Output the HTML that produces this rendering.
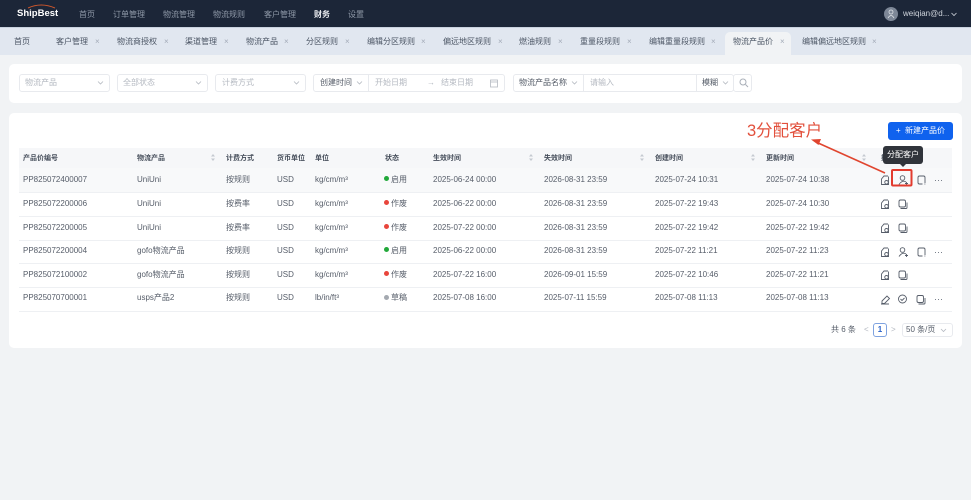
<!DOCTYPE html>
<html lang="zh"><head><meta charset="utf-8"><style>
*{box-sizing:border-box}
html,body{margin:0;padding:0}
body{width:971px;height:500px;overflow:hidden;position:relative;background:#f1f3f5;font-family:"Liberation Sans","Noto Sans CJK SC",sans-serif;font-size:8px;color:#565d69}
.a{position:absolute;white-space:nowrap;line-height:12px}
.box{position:absolute;background:#fff;border:1px solid #e8eaee;border-radius:3px}
.m{top:9px;color:#8f99a8}
.t{top:36px;color:#4c5665}
.x{top:36px;color:#a3abb8}
.ph{color:#b4b9c1;top:77px}
.dk{color:#555c68;top:77px}
.hd{top:153px;font-weight:bold;font-size:7px;color:#454d5a}
.r{height:1px;left:19px;width:933px;background:#eef0f3;position:absolute}
.d{position:absolute;width:5px;height:5px;border-radius:50%}
svg{position:absolute;fill:none;overflow:visible}
.ic{stroke:#565d69;stroke-width:.9}
.ch{stroke:#b4b9c1;stroke-width:.8}
.so{fill:#c4c9d0}
</style></head><body>
<div class="a" style="left:0;top:0;width:971px;height:27px;background:#1c2638"></div>
<div class="a" style="left:0;top:27px;width:971px;height:28px;background:#e1e7f0;border-top:1px solid #c9d2df"></div>
<svg style="left:0;top:0" width="70" height="12"><path d="M28 8Q41 2 55 8" stroke="#c8552c" stroke-width="1"/></svg>
<div class="a" style="left:17px;top:8px;color:#fff;font-weight:bold;font-size:9.500px">ShipBest</div>
<div class="a m" style="left:79px">首页</div><div class="a m" style="left:113px">订单管理</div><div class="a m" style="left:163px">物流管理</div><div class="a m" style="left:213px">物流规则</div><div class="a m" style="left:264px">客户管理</div><div class="a m" style="left:314px;color:#eef0f4;font-weight:bold">财务</div><div class="a m" style="left:348px">设置</div>
<div class="a" style="left:884px;top:7px;width:14px;height:14px;border-radius:50%;background:#7d8797"></div>
<svg style="left:887px;top:9px" width="8" height="9"><circle cx="4" cy="3" r="2" stroke="#dfe3e8" stroke-width=".8"/><path d="M1 9Q4 4 7 9" stroke="#dfe3e8" stroke-width=".8"/></svg>
<div class="a" style="left:903px;top:8px;color:#cfd4dc">weiqian@d...</div>
<svg style="left:0;top:0" width="971" height="27"><path d="M951.500 13l2.500 2.500 2.500-2.500" stroke="#cfd4dc" stroke-width=".8"/></svg>

<div class="a" style="left:725px;top:32px;width:66px;height:23px;background:#f1f3f5;border-radius:5px 5px 0 0"></div>
<div class="a t" style="left:14px">首页</div>
<div class="a t" style="left:56px">客户管理</div><div class="a x" style="left:95px">×</div>
<div class="a t" style="left:117px">物流商授权</div><div class="a x" style="left:164px">×</div>
<div class="a t" style="left:185px">渠道管理</div><div class="a x" style="left:224px">×</div>
<div class="a t" style="left:246px">物流产品</div><div class="a x" style="left:284px">×</div>
<div class="a t" style="left:306px">分区规则</div><div class="a x" style="left:345px">×</div>
<div class="a t" style="left:367px">编辑分区规则</div><div class="a x" style="left:421px">×</div>
<div class="a t" style="left:443px">偏远地区规则</div><div class="a x" style="left:498px">×</div>
<div class="a t" style="left:519px">燃油规则</div><div class="a x" style="left:558px">×</div>
<div class="a t" style="left:580px">重量段规则</div><div class="a x" style="left:627px">×</div>
<div class="a t" style="left:649px">编辑重量段规则</div><div class="a x" style="left:711px">×</div>
<div class="a t" style="left:733px">物流产品价</div><div class="a x" style="left:780px">×</div>
<div class="a t" style="left:802px">编辑偏远地区规则</div><div class="a x" style="left:872px">×</div>

<div class="a" style="left:9px;top:64px;width:953px;height:39px;background:#fff;border-radius:5px"></div>
<div class="box" style="left:19px;top:74px;width:91px;height:18px"></div><div class="a ph" style="left:25px">物流产品</div>
<div class="box" style="left:117px;top:74px;width:91px;height:18px"></div><div class="a ph" style="left:123px">全部状态</div>
<div class="box" style="left:215px;top:74px;width:91px;height:18px"></div><div class="a ph" style="left:222px">计费方式</div>
<div class="box" style="left:313px;top:74px;width:192px;height:18px"></div><div class="a" style="left:368px;top:74px;width:1px;height:18px;background:#e8eaee"></div>
<div class="a dk" style="left:320px">创建时间</div><div class="a ph" style="left:375px">开始日期</div><div class="a ph" style="left:441px">结束日期</div><div class="a ph" style="left:427px">→</div>
<svg style="left:490px;top:79px" width="9" height="9"><rect x=".5" y="1" width="7" height="7" stroke="#b4b9c1" stroke-width=".8"/><path d="M.5 3h7" stroke="#b4b9c1" stroke-width=".8"/></svg>
<div class="box" style="left:513px;top:74px;width:221px;height:18px"></div><div class="a" style="left:583px;top:74px;width:1px;height:18px;background:#e8eaee"></div><div class="a" style="left:696px;top:74px;width:1px;height:18px;background:#e8eaee"></div>
<div class="a dk" style="left:519px">物流产品名称</div><div class="a ph" style="left:590px">请输入</div><div class="a dk" style="left:702px">模糊</div>
<div class="box" style="left:733px;top:74px;width:19px;height:18px"></div>
<svg style="left:739px;top:78px" width="10" height="10"><circle cx="4" cy="4" r="3" stroke="#a9afb8"/><path d="M6.500 6.500l2.500 2.500" stroke="#a9afb8"/></svg>
<svg style="left:0;top:0" width="971" height="100"><path class="ch" d="M98 81.500l2.500 2.500 2.500-2.500M196 81.500l2.500 2.500 2.500-2.500M294 81.500l2.500 2.500 2.500-2.500M357 81.500l2.500 2.500 2.500-2.500M572 81.500l2.500 2.500 2.500-2.500M723 81.500l2.500 2.500 2.500-2.500"/></svg>

<div class="a" style="left:9px;top:113px;width:953px;height:235px;background:#fff;border-radius:5px"></div>
<div class="a" style="left:888px;top:122px;width:65px;height:18px;background:#0f62ee;border-radius:3px;color:#fff;text-align:center;line-height:18px;word-spacing:2px">+ 新建产品价</div>
<div class="a" style="left:19px;top:148px;width:933px;height:20px;background:#f6f7f9"></div>
<div class="a" style="left:19px;top:168px;width:933px;height:24px;background:#f8f9fa"></div>
<div class="r" style="top:192px"></div><div class="r" style="top:216px"></div><div class="r" style="top:240px"></div><div class="r" style="top:263px"></div><div class="r" style="top:287px"></div><div class="r" style="top:311px"></div>

<div class="a hd" style="left:23px">产品价编号</div><div class="a hd" style="left:137px">物流产品</div><div class="a hd" style="left:226px">计费方式</div><div class="a hd" style="left:277px">货币单位</div><div class="a hd" style="left:315px">单位</div><div class="a hd" style="left:385px">状态</div><div class="a hd" style="left:433px">生效时间</div><div class="a hd" style="left:544px">失效时间</div><div class="a hd" style="left:655px">创建时间</div><div class="a hd" style="left:766px">更新时间</div><div class="a hd" style="left:881px">操作</div>
<svg style="left:0;top:0" width="971" height="170"><path class="so" d="M211 156.500l2-2.500 2 2.500zM211 158.500l2 2.500 2-2.500zM529 156.500l2-2.500 2 2.500zM529 158.500l2 2.500 2-2.500zM640 156.500l2-2.500 2 2.500zM640 158.500l2 2.500 2-2.500zM751 156.500l2-2.500 2 2.500zM751 158.500l2 2.500 2-2.500zM862 156.500l2-2.500 2 2.500zM862 158.500l2 2.500 2-2.500z"/></svg>

<div class="a" style="left:23px;top:174px">PP825072400007</div><div class="a" style="left:137px;top:174px">UniUni</div><div class="a" style="left:226px;top:174px">按规则</div><div class="a" style="left:277px;top:174px">USD</div><div class="a" style="left:315px;top:174px">kg/cm/m³</div><div class="d" style="left:384px;top:176px;background:#22a83a"></div><div class="a" style="left:391px;top:174px">启用</div><div class="a" style="left:433px;top:174px">2025-06-24 00:00</div><div class="a" style="left:544px;top:174px">2026-08-31 23:59</div><div class="a" style="left:655px;top:174px">2025-07-24 10:31</div><div class="a" style="left:766px;top:174px">2025-07-24 10:38</div>

<div class="a" style="left:23px;top:198px">PP825072200006</div><div class="a" style="left:137px;top:198px">UniUni</div><div class="a" style="left:226px;top:198px">按费率</div><div class="a" style="left:277px;top:198px">USD</div><div class="a" style="left:315px;top:198px">kg/cm/m³</div><div class="d" style="left:384px;top:200px;background:#e8453c"></div><div class="a" style="left:391px;top:198px">作废</div><div class="a" style="left:433px;top:198px">2025-06-22 00:00</div><div class="a" style="left:544px;top:198px">2026-08-31 23:59</div><div class="a" style="left:655px;top:198px">2025-07-22 19:43</div><div class="a" style="left:766px;top:198px">2025-07-24 10:30</div>

<div class="a" style="left:23px;top:222px">PP825072200005</div><div class="a" style="left:137px;top:222px">UniUni</div><div class="a" style="left:226px;top:222px">按费率</div><div class="a" style="left:277px;top:222px">USD</div><div class="a" style="left:315px;top:222px">kg/cm/m³</div><div class="d" style="left:384px;top:224px;background:#e8453c"></div><div class="a" style="left:391px;top:222px">作废</div><div class="a" style="left:433px;top:222px">2025-07-22 00:00</div><div class="a" style="left:544px;top:222px">2026-08-31 23:59</div><div class="a" style="left:655px;top:222px">2025-07-22 19:42</div><div class="a" style="left:766px;top:222px">2025-07-22 19:42</div>

<div class="a" style="left:23px;top:245px">PP825072200004</div><div class="a" style="left:137px;top:245px">gofo物流产品</div><div class="a" style="left:226px;top:245px">按规则</div><div class="a" style="left:277px;top:245px">USD</div><div class="a" style="left:315px;top:245px">kg/cm/m³</div><div class="d" style="left:384px;top:247px;background:#22a83a"></div><div class="a" style="left:391px;top:245px">启用</div><div class="a" style="left:433px;top:245px">2025-06-22 00:00</div><div class="a" style="left:544px;top:245px">2026-08-31 23:59</div><div class="a" style="left:655px;top:245px">2025-07-22 11:21</div><div class="a" style="left:766px;top:245px">2025-07-22 11:23</div>

<div class="a" style="left:23px;top:269px">PP825072100002</div><div class="a" style="left:137px;top:269px">gofo物流产品</div><div class="a" style="left:226px;top:269px">按规则</div><div class="a" style="left:277px;top:269px">USD</div><div class="a" style="left:315px;top:269px">kg/cm/m³</div><div class="d" style="left:384px;top:271px;background:#e8453c"></div><div class="a" style="left:391px;top:269px">作废</div><div class="a" style="left:433px;top:269px">2025-07-22 16:00</div><div class="a" style="left:544px;top:269px">2026-09-01 15:59</div><div class="a" style="left:655px;top:269px">2025-07-22 10:46</div><div class="a" style="left:766px;top:269px">2025-07-22 11:21</div>

<div class="a" style="left:23px;top:292px">PP825070700001</div><div class="a" style="left:137px;top:292px">usps产品2</div><div class="a" style="left:226px;top:292px">按规则</div><div class="a" style="left:277px;top:292px">USD</div><div class="a" style="left:315px;top:292px">lb/in/ft³</div><div class="d" style="left:384px;top:295px;background:#a4a9b0"></div><div class="a" style="left:391px;top:292px">草稿</div><div class="a" style="left:433px;top:292px">2025-07-08 16:00</div><div class="a" style="left:544px;top:292px">2025-07-11 15:59</div><div class="a" style="left:655px;top:292px">2025-07-08 11:13</div><div class="a" style="left:766px;top:292px">2025-07-08 11:13</div>

<svg style="left:0;top:0" width="971" height="330">
<g class="ic">
<path d="M888 176h-4l-2.500 3v5.500h7v-8M886.500 180.500a1.800 1.800 0 1 0 .01 0"/>
<path d="M888 200h-4l-2.500 3v5.500h7v-8M886.500 204.500a1.800 1.800 0 1 0 .01 0"/>
<path d="M888 224h-4l-2.500 3v5.500h7v-8M886.500 228.500a1.800 1.800 0 1 0 .01 0"/>
<path d="M888 248h-4l-2.500 3v5.500h7v-8M886.500 252.500a1.800 1.800 0 1 0 .01 0"/>
<path d="M888 271h-4l-2.500 3v5.500h7v-8M886.500 275.500a1.800 1.800 0 1 0 .01 0"/>
<path d="M882 301l5-5 2.500 2.500-5 5h-2.500zM881 304h8"/>
<circle cx="902.500" cy="178" r="2.300"/><path d="M899 184.500q3.500-5 7-2.500M905 183.500h3M906.500 182v3"/>
<circle cx="902.500" cy="250" r="2.300"/><path d="M899 256.500q3.500-5 7-2.500M905 255.500h3M906.500 254v3"/>
<path d="M925 183v-5.500q0-1.500-1.500-1.500h-4q-1.500 0-1.500 1.500v5q0 1.500 1.500 1.500h3M924.500 184h.8"/>
<path d="M925 255v-5.500q0-1.500-1.500-1.500h-4q-1.500 0-1.500 1.500v5q0 1.500 1.500 1.500h3M924.500 256h.8"/>
<rect x="899" y="200" width="6.500" height="7" rx="1.500"/><path d="M900.500 208.500h5.500q1 0 1-1v-5"/>
<rect x="899" y="224" width="6.500" height="7" rx="1.500"/><path d="M900.500 232.500h5.500q1 0 1-1v-5"/>
<rect x="899" y="271" width="6.500" height="7" rx="1.500"/><path d="M900.500 279.500h5.500q1 0 1-1v-5"/>
<circle cx="902.500" cy="299" r="4"/><path d="M900.500 299l1.500 1.500 2.500-2.500"/>
<rect x="917" y="295.500" width="6.500" height="7" rx="1.500"/><path d="M918.500 304h5.500q1 0 1-1v-5"/>
</g>
<path d="M935 180.500h1M938 180.500h1M941 180.500h1M935 252.500h1M938 252.500h1M941 252.500h1M935 299.500h1M938 299.500h1M941 299.500h1" stroke="#7a818c"/>
<path d="M885 173L817 142.500" stroke="#e0452f" stroke-width="1.600"/><path d="M811 139.500l10-.5-2.500 6z" fill="#e0452f"/>
<rect x="892" y="170" width="19.500" height="15.500" rx="1" stroke="#e23b2e" stroke-width="2"/>
<path d="M900 164h6l-3 3z" fill="#30343b"/>
</svg>
<div class="a" style="left:883px;top:146px;width:40px;height:18px;background:#30343b;border-radius:3px;color:#fff;text-align:center;line-height:18px">分配客户</div>
<div class="a" style="left:747px;top:122px;font-size:16.500px;line-height:18px;color:#e2503c">3分配客户</div>

<div class="a" style="left:831px;top:324px">共 6 条</div>
<div class="a" style="left:864px;top:324px;color:#b4b9c1">&lt;</div>
<div class="a" style="left:873px;top:323px;width:14px;height:14px;border:1px solid #7fa3e0;border-radius:3px;text-align:center;line-height:12px;color:#2a62c8;font-weight:bold">1</div>
<div class="a" style="left:891px;top:324px;color:#b4b9c1">&gt;</div>
<div class="box" style="left:902px;top:323px;width:51px;height:14px"></div>
<div class="a" style="left:906px;top:324px">50 条/页</div>
<svg style="left:0;top:0" width="971" height="340"><path class="ch" d="M941 329l2.500 2.500 2.500-2.500"/></svg>
</body></html>
